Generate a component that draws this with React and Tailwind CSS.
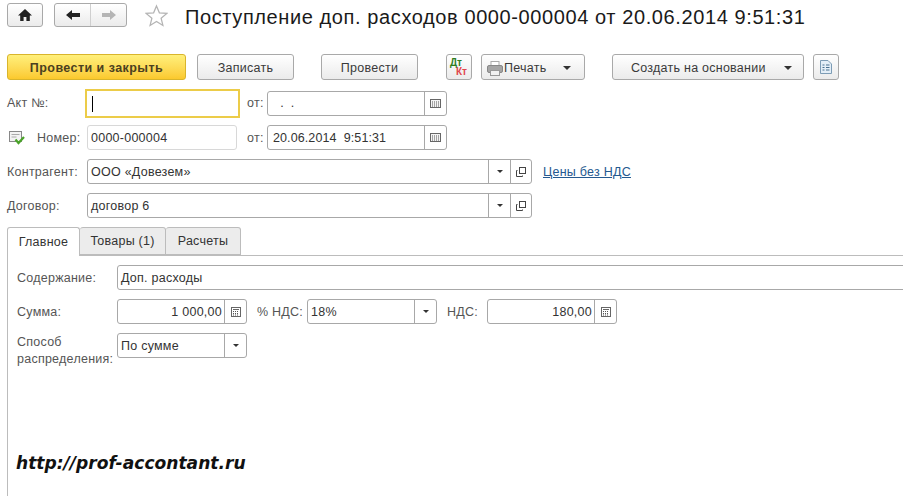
import React from "react";

const btn = "flex items-center justify-center h-[26px] pt-[2px] rounded-[3px] border border-[#a9a9a9] bg-gradient-to-b from-white to-[#ebebeb] text-[#3a3a3a] shrink-0";
const field = "flex items-stretch h-[25px] rounded-[3px] border border-[#a8a8a8] bg-white shrink-0 overflow-hidden";
const label = "text-[#555] shrink-0 pt-px";

const Caret = ({ small }) => (
  <svg width={small ? 6 : 8} height={small ? 3 : 4} viewBox="0 0 10 5" className="block"><path d="M0 0h10L5 5z" fill="#333" /></svg>
);

const Calendar = () => (
  <svg width="11" height="9" viewBox="0 0 11 9" className="block">
    <rect x="0.5" y="0.5" width="10" height="8" fill="#f4f4f4" stroke="#666" />
    <path d="M2 3h7M2 5h7M2 7h7" stroke="#555" strokeDasharray="1 1" />
  </svg>
);

const Calc = () => (
  <svg width="10" height="10" viewBox="0 0 10 10" className="block">
    <rect x="0.5" y="0.5" width="9" height="9" fill="#fff" stroke="#666" />
    <path d="M2 2.500h6" stroke="#666" />
    <path d="M2 4.500h6M2 6.500h6M2 8h6" stroke="#555" strokeDasharray="1 1" />
  </svg>
);

const Open = () => (
  <svg width="10" height="10" viewBox="0 0 10 10" className="block" fill="none" stroke="#444">
    <rect x="3.5" y="0.5" width="6" height="6" />
    <path d="M1.5 3.500h-1v6h6v-1" />
  </svg>
);

const Cell = ({ w, children }) => (
  <div className={`${w} flex items-center justify-center border-l border-[#a8a8a8] shrink-0`}>{children}</div>
);

const DateField = ({ value, up }) => (
  <div className={`${field} w-[180px]`}>
    <div className={`flex-1 flex items-center pl-[5px] text-[#333] tracking-[0.1px] whitespace-pre ${up ? "" : "pt-px"}`}>{value}</div>
    <Cell w="w-[22px]"><Calendar /></Cell>
  </div>
);

const RefField = ({ value }) => (
  <div className={`${field} w-[445px]`}>
    <div className="flex-1 flex items-center pl-[3px] pt-px text-[#333]">{value}</div>
    <Cell w="w-[22px]"><Caret small /></Cell>
    <Cell w="w-[21px]"><Open /></Cell>
  </div>
);

const Small = ({ value, right, icon, w = "w-[130px]" }) => (
  <div className={`${field} ${w}`}>
    <div className={`flex-1 flex items-center pt-px text-[#333] ${right ? "justify-end pr-[2px]" : "pl-[3px]"}`}>{value}</div>
    <Cell w="w-[22px]">{icon}</Cell>
  </div>
);

export default function App() {
  return (
    <div className="w-[903px] h-[496px] overflow-hidden bg-white flex flex-col pl-[7px] pt-[3px] text-[12.5px] tracking-[0.25px] font-['Liberation_Sans',Arial,sans-serif] text-[#333]">
      {/* Title row */}
      <div className="flex items-center h-[24px]">
        <div className={`${btn} !h-[24px] w-[36px] !pt-0`}>
          <svg width="14" height="12" viewBox="0 0 14 12"><path d="M7 0L0 6.500h2.200V12h3.400V8h2.800v4h3.400V6.500H14z" fill="#222" /></svg>
        </div>
        <div className={`${btn} !h-[24px] w-[73px] ml-[11px] !justify-start !pt-0`}>
          <div className="w-[36px] h-full flex items-center justify-center border-r border-[#cfcfcf]">
            <svg width="14" height="10" viewBox="0 0 14 10"><path d="M0 5L6 0v3h8v4H6v3z" fill="#222" /></svg>
          </div>
          <div className="flex-1 flex items-center justify-center">
            <svg width="14" height="10" viewBox="0 0 14 10"><path d="M14 5L8 0v3H0v4h8v3z" fill="#b5b5b5" /></svg>
          </div>
        </div>
        <svg width="23" height="23" viewBox="0 0 24 23" className="ml-[18px] shrink-0" fill="#fff" stroke="#b4b4b4" strokeWidth="1.3">
          <path d="M12 1.500l3 7.200 7.800.6-6 5 1.900 7.600L12 17.800l-6.700 4.100 1.900-7.600-6-5 7.800-.6z" />
        </svg>
        <div className="ml-[17px] pt-[3px] text-[20px] tracking-[0.6px] text-[#1a1a1a] whitespace-nowrap">Поступление доп. расходов 0000-000004 от 20.06.2014 9:51:31</div>
      </div>

      {/* Command bar */}
      <div className="flex items-center mt-[27px]">
        <div className="flex items-center justify-center h-[26px] pt-[2px] w-[179px] rounded-[3px] border border-[#d9b52c] bg-gradient-to-b from-[#fff07a] to-[#fbc92c] font-bold tracking-[0.45px] text-[#4a4020]">Провести и закрыть</div>
        <div className={`${btn} w-[97px] ml-[11px]`}>Записать</div>
        <div className={`${btn} w-[97px] ml-[27px]`}>Провести</div>
        <div className={`${btn} w-[26px] ml-[28px] flex-col !items-start !pt-0 pl-[3px] leading-[9px] text-[10px] font-bold tracking-normal`}>
          <span className="text-[#2e7d1e]">Дт</span>
          <span className="text-[#e0474c] ml-[6px]">Кт</span>
        </div>
        <div className={`${btn} w-[104px] ml-[9px] !justify-start pl-[5px]`}>
          <svg width="16" height="15" viewBox="0 0 16 15" className="shrink-0">
            <rect x="4" y="0.5" width="8" height="5" fill="#fff" stroke="#aaa" />
            <rect x="0.500" y="4.500" width="15" height="7" rx="1.500" fill="#a5a5a5" stroke="#888" />
            <rect x="3.500" y="9.500" width="9" height="5" fill="#f2f2f2" stroke="#999" />
          </svg>
          <span className="ml-[1px]">Печать</span>
          <span className="ml-auto mr-[13px]"><Caret /></span>
        </div>
        <div className={`${btn} w-[192px] ml-[27px] !justify-start pl-[18px]`}>
          <span>Создать на основании</span>
          <span className="ml-auto mr-[11px]"><Caret /></span>
        </div>
        <div className={`${btn} w-[26px] ml-[9px] !pt-0`}>
          <svg width="12" height="14" viewBox="0 0 12 14">
            <path d="M.5.500h7.500l3.500 3.500v9.500h-11z" fill="#e3eef7" stroke="#7d9cb5" />
            <path d="M2.500 5h2M6 5h3.500M2.500 7.500h2M6 7.500h3.500M2.500 10h2M6 10h3.500" stroke="#48708f" />
          </svg>
        </div>
      </div>

      {/* Header fields */}
      <div className="flex items-center mt-[9px] h-[29px]">
        <span className={`${label} !pt-0 w-[78px]`}>Акт №:</span>
        <div className="w-[155px] h-[29px] border-2 border-[#eccc49] bg-white flex items-center pl-[5px] shrink-0">
          <div className="w-px h-[16px] bg-black" />
        </div>
        <span className={`${label} !pt-0 ml-[7px] w-[20px]`}>от:</span>
        <DateField up value="  .  ." />
      </div>
      <div className="flex items-center mt-[7px] h-[25px]">
        <svg width="16" height="14" viewBox="0 0 16 14" className="ml-[2px] shrink-0">
          <rect x="0.500" y="0.500" width="12" height="10" fill="#f3f3f3" stroke="#888" />
          <path d="M2.500 3.500h8M2.500 6h5" stroke="#aaa" />
          <path d="M6.500 8.500l3 3.500 5.500-6" fill="none" stroke="#4aa329" strokeWidth="2.200" />
        </svg>
        <span className={`${label} ml-[12px] w-[50px]`}>Номер:</span>
        <div className={`${field} w-[150px] !border-[#d8d8d8] items-center pl-[3px]`}><span className="self-center pt-px">0000-000004</span></div>
        <span className={`${label} ml-[10px] w-[20px]`}>от:</span>
        <DateField value="20.06.2014  9:51:31" />
      </div>
      <div className="flex items-center mt-[9px] h-[25px]">
        <span className={`${label} w-[80px]`}>Контрагент:</span>
        <RefField value="ООО «Довезем»" />
        <a className="ml-[11px] pt-px text-[#25598f] underline">Цены без НДС</a>
      </div>
      <div className="flex items-center mt-[9px] h-[25px]">
        <span className={`${label} w-[80px]`}>Договор:</span>
        <RefField value="договор 6" />
      </div>

      {/* Tabs */}
      <div className="flex items-end mt-[9px] h-[28px] relative z-10 shrink-0">
        <div className="w-[73px] h-[29px] -mb-px flex items-center justify-center rounded-t-[3px] border border-b-0 border-[#bcbcbc] bg-white">Главное</div>
        <div className="w-[86px] h-[28px] flex items-center justify-center rounded-t-[3px] border border-l-0 border-[#bcbcbc] bg-[#ececec]">Товары (1)</div>
        <div className="w-[75px] h-[28px] flex items-center justify-center rounded-t-[3px] border border-l-0 border-[#bcbcbc] bg-[#ececec]">Расчеты</div>
      </div>

      {/* Tab page */}
      <div className="flex-1 min-w-0 border-l border-t border-[#bcbcbc] pl-[9px] pt-[9px] flex flex-col">
        <div className="flex items-center h-[25px]">
          <span className={`${label} w-[100px]`}>Содержание:</span>
          <div className={`${field} w-[800px] items-center pl-[3px]`}><span className="self-center pt-px">Доп. расходы</span></div>
        </div>
        <div className="flex items-center h-[25px] mt-[9px]">
          <span className={`${label} w-[100px]`}>Сумма:</span>
          <Small value="1 000,00" right icon={<Calc />} />
          <span className={`${label} ml-[10px] w-[50px]`}>% НДС:</span>
          <Small value="18%" icon={<Caret small />} />
          <span className={`${label} ml-[10px] w-[40px]`}>НДС:</span>
          <Small value="180,00" right icon={<Calc />} />
        </div>
        <div className="flex items-start mt-[9px]">
          <span className={`${label} w-[100px] leading-[17px]`}>Способ<br />распределения:</span>
          <Small value="По сумме" icon={<Caret small />} />
        </div>
        <div className="mt-[83px] -ml-px font-['DejaVu_Sans',sans-serif] font-bold italic text-[17.1px] tracking-normal text-[#111] whitespace-nowrap">http://prof-accontant.ru</div>
      </div>
    </div>
  );
}
